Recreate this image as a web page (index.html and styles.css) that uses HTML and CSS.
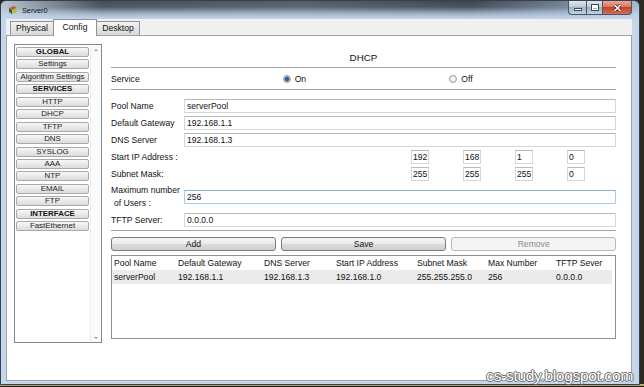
FILE: index.html
```html
<!DOCTYPE html>
<html lang="en">

<head>

  <meta charset="utf-8">

  <title>Server0</title>

  <link rel="stylesheet" href="styles.css">
</head>

<body>

  <div class="window">
    <div class="titlebar">
      <svg class="app-icon" width="10" height="10" viewBox="0 0 10 10">
        <path d="M1 3 L6 1 L9 3 L4 5 Z" fill="#d9503c"></path>
        <path d="M1 3 L4 5 L4 9 L1 7 Z" fill="#2f6b2a"></path>
        <path d="M4 5 L9 3 L9 7 L4 9 Z" fill="#a3c64c"></path>
      </svg>
      <span class="title">Server0</span>
      <div class="caption">
        <span class="cap cap-min"><i></i></span>
        <span class="cap cap-max"><i></i></span>
        <span class="cap cap-close">
          <svg width="9" height="8" viewBox="0 0 9 8">
            <path d="M1.5 1 L7.5 7 M7.5 1 L1.5 7" stroke="#5a1d14" stroke-width="3"></path>
            <path d="M1.5 1 L7.5 7 M7.5 1 L1.5 7" stroke="#fff" stroke-width="1.6"></path>
          </svg>
        </span>
      </div>
    </div>

    <div class="client">
      <div class="tabs">
        <div class="tab">Physical</div>
        <div class="tab tab-active">Config</div>
        <div class="tab">Desktop</div>
      </div>

      <div class="panel">
        <div class="side">
          <div class="side-list">
            <div class="side-btn side-head">GLOBAL</div>
            <div class="side-btn">Settings</div>
            <div class="side-btn">Algorithm Settings</div>
            <div class="side-btn side-head">SERVICES</div>
            <div class="side-btn">HTTP</div>
            <div class="side-btn">DHCP</div>
            <div class="side-btn">TFTP</div>
            <div class="side-btn">DNS</div>
            <div class="side-btn">SYSLOG</div>
            <div class="side-btn">AAA</div>
            <div class="side-btn">NTP</div>
            <div class="side-btn">EMAIL</div>
            <div class="side-btn">FTP</div>
            <div class="side-btn side-head">INTERFACE</div>
            <div class="side-btn">FastEthernet</div>
          </div>
          <div class="side-scroll">
            <span class="arrow arrow-up"></span>
            <span class="arrow arrow-down"></span>
          </div>
        </div>

        <div class="dhcp">
          <div class="dhcp-title">DHCP</div>

          <div class="service-row">
            <span class="service-label">Service</span>
            <span class="radio"><span class="radio-dot radio-on"></span>On</span>
            <span class="radio"><span class="radio-dot"></span>Off</span>
          </div>

          <div class="fields">
            <div class="field">
              <span class="field-label">Pool Name</span>
              <input class="text" type="text" value="serverPool">
            </div>
            <div class="field">
              <span class="field-label">Default Gateway</span>
              <input class="text" type="text" value="192.168.1.1">
            </div>
            <div class="field">
              <span class="field-label">DNS Server</span>
              <input class="text" type="text" value="192.168.1.3">
            </div>
            <div class="field">
              <span class="field-label">Start IP Address :</span>
              <div class="octets">
                <input class="octet" type="text" value="192">
                <input class="octet" type="text" value="168">
                <input class="octet" type="text" value="1">
                <input class="octet" type="text" value="0">
              </div>
            </div>
            <div class="field">
              <span class="field-label">Subnet Mask:</span>
              <div class="octets">
                <input class="octet" type="text" value="255">
                <input class="octet" type="text" value="255">
                <input class="octet" type="text" value="255">
                <input class="octet" type="text" value="0">
              </div>
            </div>
            <div class="field field-tall">
              <span class="field-label">Maximum number<br><span class="indent">of Users :</span></span>
              <input class="text text-focus" type="text" value="256">
            </div>
            <div class="field">
              <span class="field-label">TFTP Server:</span>
              <input class="text" type="text" value="0.0.0.0">
            </div>
          </div>

          <div class="actions">
            <button class="btn">Add</button>
            <button class="btn">Save</button>
            <button class="btn btn-disabled">Remove</button>
          </div>

          <div class="pools">
            <table>
              <thead>
                <tr>
                  <th>Pool Name</th>
                  <th>Default Gateway</th>
                  <th>DNS Server</th>
                  <th>Start IP Address</th>
                  <th>Subnet Mask</th>
                  <th>Max Number</th>
                  <th>TFTP Sever</th>
                </tr>
              </thead>
              <tbody>
                <tr>
                  <td>serverPool</td>
                  <td>192.168.1.1</td>
                  <td>192.168.1.3</td>
                  <td>192.168.1.0</td>
                  <td>255.255.255.0</td>
                  <td>256</td>
                  <td>0.0.0.0</td>
                </tr>
              </tbody>
            </table>
          </div>
        </div>
      </div>
    </div>
  </div>

  <div class="watermark">cs-study.blogspot.com</div>

</body>

</html>
```

FILE: styles.css
```css
* {
  box-sizing: border-box;
}

body {
  margin: 0;
  width: 644px;
  height: 387px;
  overflow: hidden;
  position: relative;
  font-family: "Liberation Sans", Arial, sans-serif;
  font-size: 8.6px;
  color: #111;
  background: linear-gradient(to top, #1d1b16 0, #1d1b16 1px, #b59c5a 1px, #c9b170 3px, #2a2822 3px);
}

/* window frame */

.window {
  width: 640px;
  height: 385px;
  border: 1px solid #38414b;
  border-radius: 6px 6px 0 0;
  padding: 0 7px 3px 5px;
  display: flex;
  flex-direction: column;
  background:
    linear-gradient(180deg, rgba(196, 214, 236, 0) 0, rgba(196, 214, 236, 0.1) 6px, rgba(196, 214, 236, 0.75) 13px, #c4d6ec 18px),
    linear-gradient(90deg, #b9c4d0 0, #8793a1 40px, #434c57 100px, #545d68 300px, #3c4450 470px, #6e7d8f 560px, #a2bbd6 640px);
}

.titlebar {
  flex: none;
  height: 18px;
  display: flex;
  align-items: center;
}

.app-icon {
  margin-left: 2px;
  margin-right: 4px;
}

.title {
  font-size: 7.3px;
  color: #111;
}

.caption {
  margin-left: auto;
  align-self: flex-start;
  display: flex;
  height: 14px;
}

.cap {
  height: 14px;
  border: 1px solid #4a5565;
  border-top: none;
  display: flex;
  align-items: center;
  justify-content: center;
  background: linear-gradient(#dfe6ee 0, #bccad9 45%, #9fb1c5 50%, #c2d1e1 100%);
}

.cap-min {
  width: 18px;
  border-radius: 0 0 0 4px;
  border-right: none;
}

.cap-min i {
  width: 8px;
  height: 3px;
  margin-top: 4px;
  background: #fff;
  border: 1px solid #3f4a58;
}

.cap-max {
  width: 17px;
}

.cap-max i {
  width: 8px;
  height: 7px;
  border: 1px solid #3f4a58;
  box-shadow: inset 0 0 0 1px #fff, inset 0 2px 0 1px #fff;
  background: #9fb1c6;
}

.cap-close {
  width: 29px;
  border-left: none;
  border-radius: 0 0 4px 0;
  background: linear-gradient(#eaa898 0, #d77761 45%, #c2442d 50%, #d66b53 100%);
}

/* client */

.client {
  flex: 1;
  display: flex;
  flex-direction: column;
  background: #f0f0f0;
}

.tabs {
  flex: none;
  height: 16px;
  display: flex;
  align-items: flex-start;
  padding-left: 4px;
}

.tab {
  width: 44px;
  height: 14px;
  margin-top: 2px;
  margin-right: -1px;
  border: 1px solid #8e9096;
  border-bottom: none;
  text-align: center;
  line-height: 12px;
  background: linear-gradient(#f4f4f4, #e4e4e4 50%, #d9d9d9);
}

.tab-active {
  height: 17px;
  margin-top: 0;
  line-height: 15px;
  position: relative;
  z-index: 1;
  background: #fff;
}

.panel {
  flex: 1;
  display: flex;
  align-items: flex-start;
  padding: 8px 15px 0 7px;
  background: #fff;
  border: 1px solid #a0a2a6;
}

/* left menu */

.side {
  width: 88px;
  height: 299px;
  display: flex;
  border: 1px solid #828790;
}

.side-list {
  width: 75px;
  padding: 2px 0 0 1px;
}

.side-btn {
  width: 73px;
  height: 10px;
  margin-bottom: 2.45px;
  border: 1px solid #a9a9a9;
  border-radius: 2px;
  background: linear-gradient(#f7f7f7, #e9e9e9 50%, #dcdcdc);
  font-size: 7.9px;
  line-height: 8px;
  text-align: center;
  color: #222;
  white-space: nowrap;
  overflow: hidden;
}

.side-head {
  font-weight: bold;
  color: #111;
}

.side-scroll {
  flex: 1;
  display: flex;
  flex-direction: column;
  justify-content: space-between;
  align-items: center;
  padding: 4px 0 3px;
  background: #fbfbfb;
  border-left: 1px solid #efefef;
}

.arrow {
  width: 0;
  height: 0;
  border-left: 2px solid transparent;
  border-right: 2px solid transparent;
}

.arrow-up {
  border-bottom: 2px solid #9a9a9a;
}

.arrow-down {
  border-top: 2px solid #9a9a9a;
}

/* dhcp form */

.dhcp {
  width: 505px;
  margin-left: 9px;
}

.dhcp-title {
  height: 24px;
  padding-top: 8px;
  text-align: center;
  font-size: 9.8px;
  line-height: 12px;
  border-bottom: 1px solid #a6a6a6;
}

.service-row {
  height: 22px;
  display: flex;
  align-items: center;
  border-bottom: 1px solid #a6a6a6;
}

.service-label {
  width: 172px;
}

.radio {
  width: 167px;
  display: flex;
  align-items: center;
}

.radio-dot {
  width: 8px;
  height: 8px;
  margin-right: 4px;
  border-radius: 50%;
  border: 1px solid #9a9fa5;
  background: radial-gradient(circle at 50% 45%, #fdfdfd, #d9d9d9);
}

.radio-on {
  background: radial-gradient(circle, #2f5f8e 0, #2f5f8e 1.6px, #9db3c8 2.6px, #ececec 3.6px);
}

.fields {
  margin-top: 9px;
  display: flex;
  flex-direction: column;
  gap: 3px;
}

.field {
  height: 14px;
  display: flex;
  align-items: center;
}

.field-tall {
  height: 26px;
  line-height: 13px;
}

.field-label {
  width: 73px;
  flex: none;
  white-space: nowrap;
}

.indent {
  padding-left: 3px;
}

.text {
  width: 432px;
  height: 14px;
  margin: 0;
  padding: 0 2px;
  font: inherit;
  color: #111;
  border: 1px solid #d3d7dc;
  border-top-color: #b4b8be;
  border-radius: 1px;
  outline: none;
}

.text-focus {
  border-color: #a7cbea;
  border-top-color: #86b3dc;
}

.octets {
  display: flex;
  gap: 34px;
  margin-left: auto;
  margin-right: 31px;
}

.octet {
  width: 18px;
  height: 14px;
  margin: 0;
  padding: 0 0 0 1px;
  font: inherit;
  color: #111;
  border: 1px solid #d3d7dc;
  border-top-color: #b4b8be;
  outline: none;
}

.actions {
  margin-top: 3px;
  padding-top: 6px;
  border-top: 1px solid #a6a6a6;
  display: grid;
  grid-template-columns: 1fr 1fr 1fr;
  gap: 5.5px;
}

.btn {
  height: 14px;
  padding: 0;
  font: inherit;
  color: #111;
  line-height: 12px;
  border: 1px solid #7a7a7a;
  border-radius: 3px;
  background: linear-gradient(#f4f4f4 0, #ebebeb 50%, #dcdcdc 50%, #cfcfcf 100%);
}

.btn-disabled {
  color: #8a8a8a;
  border-color: #b5b8bb;
  background: #f4f4f4;
}

.pools {
  margin-top: 4px;
  height: 84px;
  border: 1px solid #8a8e96;
}

table {
  width: 500px;
  table-layout: fixed;
  border-collapse: collapse;
}

th,
td {
  height: 14px;
  padding: 0 0 0 2px;
  text-align: left;
  font-weight: normal;
  white-space: nowrap;
  overflow: hidden;
}

th:nth-child(1) { width: 64px; }
th:nth-child(2) { width: 86px; }
th:nth-child(3) { width: 72px; }
th:nth-child(4) { width: 81px; }
th:nth-child(5) { width: 71px; }
th:nth-child(6) { width: 68px; }
th:nth-child(7) { width: 58px; }

tbody tr {
  background: #ebebeb;
}

.watermark {
  position: absolute;
  right: 11px;
  bottom: 2px;
  font-size: 15.5px;
  letter-spacing: -0.3px;
  color: #fff;
  text-shadow: -1px 0 #6b6b6b, 1px 0 #6b6b6b, 0 -1px #6b6b6b, 0 1px #6b6b6b;
}
```
